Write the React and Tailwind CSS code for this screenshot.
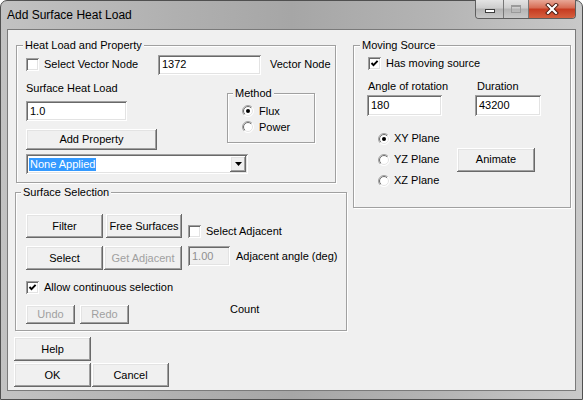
import React from 'react';

const raised =
  'bg-[#f0f0f0] shadow-[inset_-1px_-1px_#696969,inset_1px_1px_#fff,inset_-2px_-2px_#a0a0a0,inset_2px_2px_#e3e3e3]';
const sunken =
  'shadow-[inset_1px_1px_#a0a0a0,inset_-1px_-1px_#fff,inset_2px_2px_#696969,inset_-2px_-2px_#e3e3e3]';

const Btn = ({ children, disabled, className = '' }) => (
  <div
    className={`flex shrink-0 items-center justify-center ${raised} ${
      disabled ? 'text-[#a0a0a0]' : ''
    } ${className}`}
  >
    {children}
  </div>
);

const Field = ({ value, disabled, className = '' }) => (
  <div
    className={`flex shrink-0 items-center pl-[4px] ${sunken} ${
      disabled ? 'bg-[#f0f0f0] text-[#8f8f8f]' : 'bg-white'
    } ${className}`}
  >
    {value}
  </div>
);

const Check = ({ checked }) => (
  <span className={`flex h-[13px] w-[13px] shrink-0 items-center justify-center bg-white ${sunken}`}>
    {checked && (
      <svg width="13" height="13" viewBox="0 0 13 13">
        <path d="M3.5 6 L5.5 8.2 L9.6 3.8" fill="none" stroke="#000" strokeWidth="1.9" />
      </svg>
    )}
  </span>
);

const Radio = ({ checked }) => (
  <svg width="12" height="12" viewBox="0 0 12 12" className="shrink-0">
    <defs>
      <linearGradient id="rOut" x1="0" y1="0" x2="1" y2="1">
        <stop offset="0.5" stopColor="#a0a0a0" />
        <stop offset="0.5" stopColor="#ffffff" />
      </linearGradient>
      <linearGradient id="rIn" x1="0" y1="0" x2="1" y2="1">
        <stop offset="0.5" stopColor="#696969" />
        <stop offset="0.5" stopColor="#e3e3e3" />
      </linearGradient>
    </defs>
    <circle cx="6" cy="6" r="5.5" fill="#fff" stroke="url(#rOut)" strokeWidth="1" />
    <circle cx="6" cy="6" r="4.5" fill="#fff" stroke="url(#rIn)" strokeWidth="1" />
    {checked && <circle cx="6" cy="6" r="2" fill="#000" />}
  </svg>
);

const Group = ({ title, className = '', legendClass = 'ml-[6px]', children }) => (
  <fieldset
    className={`shrink-0 border border-[#a0a0a0] shadow-[inset_1px_1px_#fff,1px_1px_#fff] ${className}`}
  >
    <legend className={`${legendClass} bg-[#f0f0f0] px-[2px] leading-[14px]`}>{title}</legend>
    {children}
  </fieldset>
);

const TitleBar = () => (
  <div className="flex h-[28px] shrink-0 items-start justify-between">
    <span className="ml-[6px] mt-[6px] text-[12px] leading-[16px] text-black">Add Surface Heat Load</span>

    <div className="-mt-px mr-[6px] flex h-[19px] overflow-hidden rounded-b-[4px] border border-t-0 border-[#5e5e5e]">
      <div className="flex w-[28px] items-center justify-center border-r border-[#777] bg-[linear-gradient(#e4e4e4,#cdcdcd_45%,#b3b3b3_50%,#c8c8c8)]">
        <span className="mt-[4px] h-[4px] w-[10px] border border-[#3c3c3c] bg-white" />
      </div>
      <div className="flex w-[25px] items-center justify-center border-r border-[#777] bg-[linear-gradient(#e4e4e4,#cdcdcd_45%,#b3b3b3_50%,#c8c8c8)]">
        <span className="h-[8px] w-[10px] border border-[#9a9a9a] border-t-2 bg-transparent" />
      </div>
      <div className="flex w-[46px] items-center justify-center bg-[linear-gradient(#e8a797,#d66a52_45%,#c63a20_50%,#d5603f)]">
        <svg width="14" height="12" viewBox="0 0 14 12">
          <path d="M3 2 L11 10 M11 2 L3 10" stroke="#4a1a10" strokeWidth="4" strokeLinecap="square" />
          <path d="M3 2 L11 10 M11 2 L3 10" stroke="#fff" strokeWidth="2.2" strokeLinecap="square" />
        </svg>
      </div>
    </div>
  </div>
);

const HeatLoad = () => (
  <Group title="Heat Load and Property" className="ml-[2px] mt-[8px] h-[145px] w-[320px]">
    <div className="pl-[9px]">
      <div className="mt-[2px] flex h-[21px] items-center">
        <div className="flex w-[132px] items-center">
          <Check />
          <span className="ml-[5px]">Select Vector Node</span>
        </div>
        <Field value="1372" className="h-[20px] w-[103px]" />
        <span className="ml-[9px]">Vector Node</span>
      </div>

      <div className="flex">
        <div className="flex w-[201px] flex-col items-start">
          <span className="mt-[7px]">Surface Heat Load</span>
          <Field value="1.0" className="mt-[6px] h-[20px] w-[101px]" />
          <Btn className="mt-[8px] h-[21px] w-[131px]">Add Property</Btn>
        </div>

        <Group title="Method" legendClass="ml-[5px]" className="mt-[11px] h-[57px] w-[88px]">
          <div className="pl-[14px] pt-[3px]">
            <div className="flex h-[16px] items-center">
              <Radio checked />
              <span className="ml-[5px]">Flux</span>
            </div>
            <div className="flex h-[16px] items-center">
              <Radio />
              <span className="ml-[5px]">Power</span>
            </div>
          </div>
        </Group>
      </div>

      <div className={`mt-[4px] flex h-[20px] w-[222px] items-center bg-white p-[2px] ${sunken}`}>
        <div className="flex-1 pl-[1px]">
          <span className="inline-block bg-[#3399ff] px-[1px] leading-[13px] text-white">None Applied</span>
        </div>
        <div className={`flex h-full w-[16px] items-center justify-center ${raised}`}>
          <svg width="7" height="4" viewBox="0 0 7 4">
            <path d="M0 0 H7 L3.5 4 Z" fill="#000" />
          </svg>
        </div>
      </div>
    </div>
  </Group>
);

const SurfaceSelection = () => (
  <Group title="Surface Selection" legendClass="ml-[5px]" className="ml-[1px] mt-[2px] h-[146px] w-[332px]">
    <div className="pl-[10px]">
      <div className="mt-[15px] flex items-start">
        <Btn className="h-[24px] w-[77px]">Filter</Btn>
        <Btn className="ml-[3px] h-[24px] w-[76px]">Free Surfaces</Btn>
        <div className="ml-[6px] mt-[11px] flex items-center">
          <Check />
          <span className="ml-[5px]">Select Adjacent</span>
        </div>
      </div>

      <div className="mt-[8px] flex items-start">
        <Btn className="h-[24px] w-[77px]">Select</Btn>
        <Btn disabled className="ml-[1px] h-[24px] w-[78px]">
          Get Adjacent
        </Btn>
        <div className="ml-[6px] flex h-[20px] items-center">
          <Field disabled value="1.00" className="h-[20px] w-[42px]" />
          <span className="ml-[6px]">Adjacent angle (deg)</span>
        </div>
      </div>

      <div className="mt-[11px] flex h-[13px] items-center">
        <Check checked />
        <span className="ml-[5px]">Allow continuous selection</span>
      </div>

      <div className="mt-[11px] flex items-start">
        <Btn disabled className="h-[19px] w-[49px]">
          Undo
        </Btn>
        <Btn disabled className="ml-[5px] h-[19px] w-[49px]">
          Redo
        </Btn>
        <span className="-mt-[2px] ml-[101px]">Count</span>
      </div>
    </div>
  </Group>
);

const MovingSource = () => (
  <Group title="Moving Source" className="ml-[6px] mt-[8px] h-[170px] w-[218px]">
    <div className="pl-[13px]">
      <div className="ml-[1px] mt-[5px] flex h-[13px] items-center">
        <Check checked />
        <span className="ml-[5px]">Has moving source</span>
      </div>

      <div className="mt-[10px] flex">
        <span className="w-[108px] pl-[1px]">Angle of rotation</span>
        <span className="pl-[2px]">Duration</span>
      </div>

      <div className="mt-[2px] flex">
        <Field value="180" className="h-[21px] w-[75px]" />
        <Field value="43200" className="ml-[33px] h-[21px] w-[66px]" />
      </div>

      <div className="mt-[12px] flex items-center">
        <div className="ml-[11px] flex w-[79px] flex-col">
          {[
            ['XY Plane', true],
            ['YZ Plane', false],
            ['XZ Plane', false],
          ].map(([label, on]) => (
            <div key={label} className="flex h-[21px] items-center">
              <Radio checked={on} />
              <span className="ml-[4px]">{label}</span>
            </div>
          ))}
        </div>
        <Btn className="h-[24px] w-[78px]">Animate</Btn>
      </div>
    </div>
  </Group>
);

export default function App() {
  return (
    <div className="h-[400px] w-[583px] bg-white font-['Liberation_Sans',Arial,sans-serif] text-[11px] leading-[13px] text-black">
      <div className="flex h-full flex-col rounded-t-[7px] border border-[#505050] bg-[linear-gradient(90deg,#c2c2c2,#b0b0b0_30%,#a6a6a6_50%,#b4b4b4_75%,#c9c9c9)]">
        <TitleBar />

        {/* client area */}
        <div className="mx-[6px] flex h-[362px] shrink-0 border border-[#7a7a7a] bg-[#f0f0f0]">
          <div className="ml-[6px] flex w-[333px] shrink-0 flex-col items-start">
            <HeatLoad />
            <SurfaceSelection />
            <Btn className="mt-[6px] h-[24px] w-[77px]">Help</Btn>
            <div className="mt-[2px] flex">
              <Btn className="h-[24px] w-[77px]">OK</Btn>
              <Btn className="ml-[1px] h-[24px] w-[77px]">Cancel</Btn>
            </div>
          </div>
          <MovingSource />
        </div>
      </div>
    </div>
  );
}
